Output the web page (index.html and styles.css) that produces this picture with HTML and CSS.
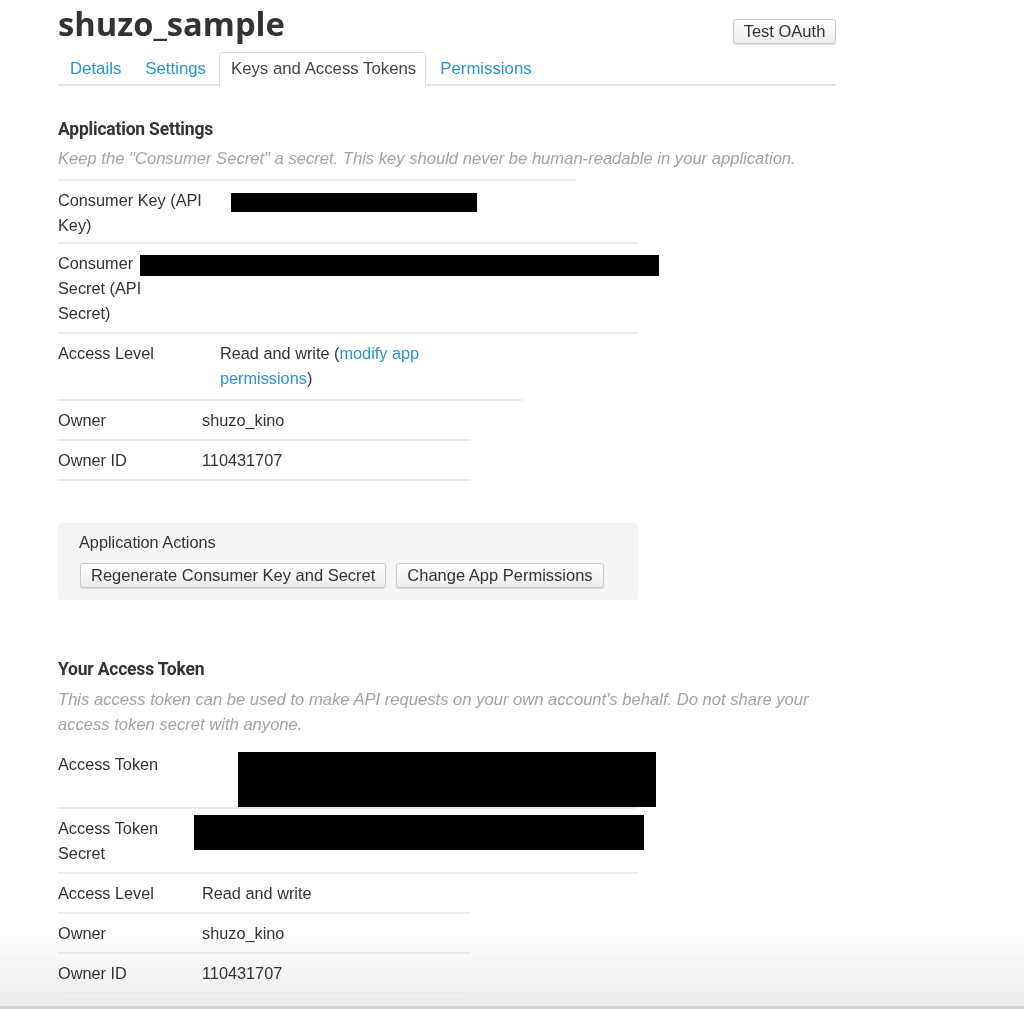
FILE: index.html
```html
<!DOCTYPE html>
<html lang="en">
<head>
<meta charset="utf-8">
<title>shuzo_sample - Keys and Access Tokens</title>
<link rel="stylesheet" href="styles.css">
</head>
<body>
<div class="page">
  <header class="app-head">
    <h1 class="app-title">shuzo_sample</h1>
    <button class="btn btn-test" type="button">Test OAuth</button>
  </header>

  <ul class="tabs">
    <li class="tab"><a href="#">Details</a></li>
    <li class="tab"><a href="#">Settings</a></li>
    <li class="tab tab-active"><a href="#">Keys and Access Tokens</a></li>
    <li class="tab"><a href="#">Permissions</a></li>
  </ul>

  <section class="section section-settings">
    <h2 class="section-title">Application Settings</h2>
    <p class="section-note">Keep the "Consumer Secret" a secret. This key should never be human-readable in your application.</p>

    <div class="kv kv-w518 kv-first">
      <div class="kv-label lw-173">Consumer Key (API Key)</div>
      <div class="kv-value"><span class="redact redact-ck"></span></div>
    </div>
    <div class="kv kv-w580">
      <div class="kv-label lw-86">Consumer Secret (API Secret)</div>
      <div class="kv-value"><span class="redact redact-cs"></span></div>
    </div>
    <div class="kv kv-w580 kv-tall">
      <div class="kv-label lw-162">Access Level</div>
      <div class="kv-value vw-215">Read and write (<a href="#">modify app permissions</a>)</div>
    </div>
    <div class="kv kv-w464">
      <div class="kv-label lw-144">Owner</div>
      <div class="kv-value">shuzo_kino</div>
    </div>
    <div class="kv kv-w412 kv-last">
      <div class="kv-label lw-144">Owner ID</div>
      <div class="kv-value">110431707</div>
    </div>
  </section>

  <div class="actions">
    <div class="actions-title">Application Actions</div>
    <div class="actions-buttons">
      <button class="btn" type="button">Regenerate Consumer Key and Secret</button>
      <button class="btn" type="button">Change App Permissions</button>
    </div>
  </div>

  <section class="section section-token">
    <h2 class="section-title">Your Access Token</h2>
    <p class="section-note">This access token can be used to make API requests on your own account's behalf. Do not share your access token secret with anyone.</p>

    <div class="kv kv-w580 kv-noline">
      <div class="kv-label lw-180">Access Token</div>
      <div class="kv-value"><span class="redact redact-at"></span></div>
    </div>
    <div class="kv kv-w580">
      <div class="kv-label lw-136">Access Token Secret</div>
      <div class="kv-value"><span class="redact redact-ats"></span></div>
    </div>
    <div class="kv kv-w580">
      <div class="kv-label lw-144">Access Level</div>
      <div class="kv-value">Read and write</div>
    </div>
    <div class="kv kv-w412">
      <div class="kv-label lw-144">Owner</div>
      <div class="kv-value">shuzo_kino</div>
    </div>
    <div class="kv kv-w412 kv-last">
      <div class="kv-label lw-144">Owner ID</div>
      <div class="kv-value">110431707</div>
    </div>
  </section>
</div>
<div class="bottom-fade"></div>
</body>
</html>
```

FILE: styles.css
```css
* { box-sizing: border-box; }

html {
  margin: 0;
  padding: 0;
  background: #fff;
}

body {
  margin: 0;
  padding: 0;
  font-family: "Liberation Sans", Arial, Helvetica, sans-serif;
  font-size: 16.3px;
  line-height: 25px;
  color: #333;
}

a {
  color: #2a94cf;
  text-decoration: none;
}

.page {
  width: 838px;
  padding: 0 0 40px 58px;
}

/* header */
.app-head {
  display: flex;
  justify-content: space-between;
  align-items: flex-start;
  width: 778px;
  height: 52px;
}

.app-title {
  margin: 3px 0 0 0;
  font-family: "Open Sans", sans-serif;
  font-weight: 700;
  font-size: 32.7px;
  line-height: 42px;
  color: #333;
  letter-spacing: 0;
}

.btn {
  font-family: "Liberation Sans", Arial, sans-serif;
  font-size: 16.5px;
  line-height: 19px;
  color: #333;
  padding: 2px 10px 2px;
  height: 25px;
  border: 1px solid #c8c8c8;
  border-radius: 3px;
  background: linear-gradient(#ffffff, #ececec);
  box-shadow: 0 1px 1px rgba(0, 0, 0, 0.12);
  cursor: pointer;
}

.btn-test {
  margin-top: 19px;
  width: 103px;
  padding: 2px 0;
}

/* tabs */
.tabs {
  list-style: none;
  margin: 0;
  padding: 0;
  width: 778px;
  display: flex;
  border-bottom: 2px solid #e3e3e3;
}

.tab {
  margin-bottom: -2px;
}

.tab a {
  display: block;
  padding: 3px 11px 3px;
  height: 32px;
  line-height: 25px;
  font-size: 16.8px;
  border: 1px solid transparent;
  border-bottom: none;
  border-radius: 4px 4px 0 0;
  color: #2a94cf;
}

.tab-active {
  margin-left: 1px;
  margin-right: 2px;
}

.tab-active a {
  color: #444;
  background: #fff;
  border-color: #dcdcdc;
  padding: 3px 9px 3px 11px;
  height: 34px;
}

/* sections */
.section {
  width: 780px;
}

.section-settings {
  margin-top: 32px;
}

.section-token {
  margin-top: 58px;
}

.section-title {
  margin: 0;
  font-family: "Roboto", "Liberation Sans", sans-serif;
  font-weight: 700;
  font-size: 17.5px;
  line-height: 22px;
  letter-spacing: -0.2px;
  color: #333;
}

.section-note {
  margin: 6px 0 8px 0;
  font-style: italic;
  font-size: 16.6px;
  color: #a3a3a3;
  line-height: 25px;
}

.section-token .section-note {
  margin-top: 7px;
  margin-bottom: 6px;
}

/* key/value rows */
.kv {
  display: flex;
  align-items: flex-start;
  border-top: 2px solid #ebebeb;
  padding: 7px 0 6px;
}

.kv-first {
  padding-top: 7px;
  padding-bottom: 4px;
}

.kv-tall {
  padding-bottom: 8px;
}

.kv-noline {
  border-top-color: transparent;
  padding-bottom: 0;
}

.kv-last {
  border-bottom: 2px solid #ebebeb;
}

.kv-w518 { width: 518px; }
.kv-w580 { width: 580px; }
.kv-w464 { width: 464px; }
.kv-w412 { width: 412px; }

.kv-label {
  flex: none;
  padding-right: 16px;
}

.lw-173 { width: 173px; }
.lw-86 { width: 86px; padding-right: 0; }
.lw-162 { width: 162px; }
.lw-144 { width: 144px; }
.lw-180 { width: 180px; }
.lw-136 { width: 136px; }

.vw-215 { width: 215px; }

.kv-value {
  flex: none;
}

.redact {
  display: block;
  background: #000;
}

.redact-ck {
  width: 246px;
  height: 19px;
  margin-top: 5px;
}

.redact-cs {
  width: 519px;
  height: 21px;
  margin-top: 4px;
  margin-left: -4px;
}

.redact-at {
  width: 418px;
  height: 55px;
}

.redact-ats {
  width: 450px;
  height: 35px;
  margin-top: -1px;
}

/* actions */
.actions {
  margin-top: 42px;
  width: 580px;
  background: #f5f5f5;
  border-radius: 4px;
  padding: 7px 21px 12px;
}

.actions-title {
  line-height: 25px;
  margin-bottom: 8px;
}

.actions-buttons {
  display: flex;
  gap: 10px;
  padding-left: 1px;
}

/* bottom fade, painted behind the page content */
.bottom-fade {
  position: fixed;
  left: 0;
  right: 0;
  bottom: 0;
  height: 78px;
  z-index: -1;
  background: linear-gradient(rgba(255, 255, 255, 0), #ebebeb);
  border-bottom: 3px solid #d2d2d2;
  pointer-events: none;
}
```
